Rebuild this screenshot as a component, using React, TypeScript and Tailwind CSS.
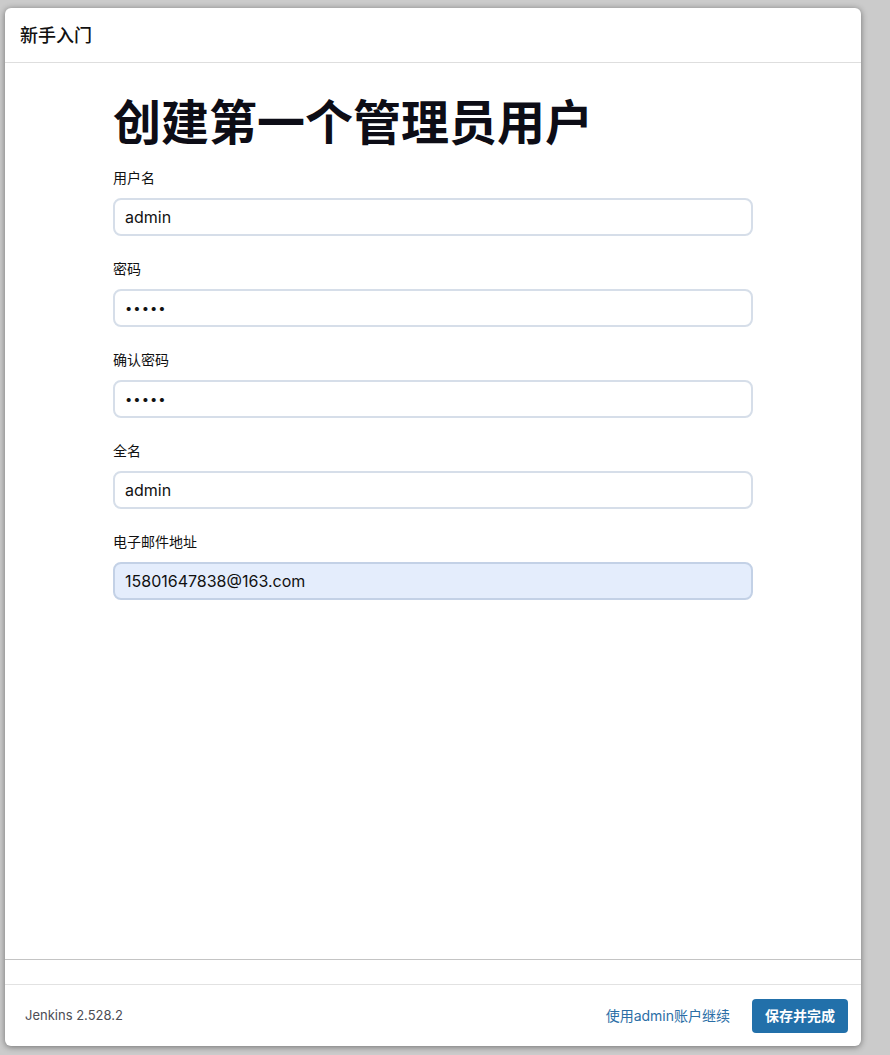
export default function App() {
  const fields = [
    { label: "用户名", type: "text", value: "admin" },
    { label: "密码", type: "password", value: "admin" },
    { label: "确认密码", type: "password", value: "admin" },
    { label: "全名", type: "text", value: "admin" },
  ];

  return (
    <div className="min-h-screen bg-[#cbcbcb] pt-[8px] pl-[5px] font-['Inter','Noto_Sans_CJK_SC',sans-serif]">
      <div className="w-[856px] h-[1038px] bg-white rounded-[6px] shadow-[0_1px_6px_rgba(0,0,0,0.45)] flex flex-col">
        {/* Header */}
        <div className="h-[55px] border-b border-[#dedede] px-[15px] flex items-center">
          <h2 className="text-[18px] font-medium text-[#111]">新手入门</h2>
        </div>

        {/* Body */}
        <div className="flex-1 pl-[108px] pt-[31px]">
          <h1 className="text-[48px] leading-[58px] font-bold text-[#0d0d16] mb-[16px]">创建第一个管理员用户</h1>
          <div className="w-[640px] flex flex-col gap-[23px]">
            {fields.map((f) => (
              <div key={f.label} className="flex flex-col gap-[10px]">
                <label className="text-[14px] leading-[20px] text-[#111]">{f.label}</label>
                <input
                  readOnly
                  type={f.type}
                  defaultValue={f.value}
                  className={
                    f.type === "password"
                      ? "h-[38px] rounded-[8px] border-2 border-[#d6dee9] bg-white px-[10px] text-[13px] tracking-[1px] text-[#111] outline-none"
                      : "h-[38px] rounded-[8px] border-2 border-[#d6dee9] bg-white px-[10px] text-[16px] text-[#111] outline-none"
                  }
                />
              </div>
            ))}
            <div className="flex flex-col gap-[10px]">
              <label className="text-[14px] leading-[20px] text-[#111]">电子邮件地址</label>
              <input
                readOnly
                type="text"
                defaultValue="15801647838@163.com"
                className="h-[38px] rounded-[8px] border-2 border-[#c3d1e6] bg-[#e4edfc] px-[10px] text-[16px] text-[#111] outline-none"
              />
            </div>
          </div>
        </div>

        {/* Footer */}
        <div className="h-[26px] border-t border-b border-t-[#c4c4c4] border-b-[#e2e2e2]"></div>
        <div className="h-[61px] pl-[20px] pr-[13px] flex items-center justify-between">
          <span className="text-[13px] text-[#4d4d55]">Jenkins 2.528.2</span>
          <div className="flex items-center gap-[22px]">
            <a className="text-[14px] text-[#2b6ea6] cursor-pointer">使用admin账户继续</a>
            <button className="h-[34px] px-[13px] rounded-[4px] bg-[#2270aa] text-white text-[14px] font-bold">
              保存并完成
            </button>
          </div>
        </div>
      </div>
    </div>
  );
}
